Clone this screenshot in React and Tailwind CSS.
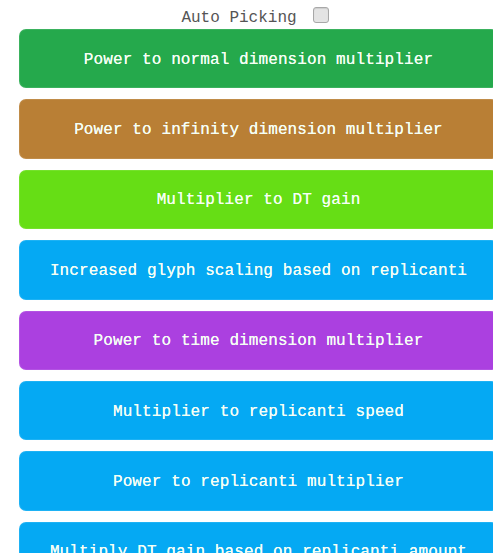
import React from "react";

const items = [
  ["Power to normal dimension multiplier", "bg-[#25a94c]"],
  ["Power to infinity dimension multiplier", "bg-[#b97f35]"],
  ["Multiplier to DT gain", "bg-[#66de15]"],
  ["Increased glyph scaling based on replicanti", "bg-[#05a9f3]"],
  ["Power to time dimension multiplier", "bg-[#ab40e0]"],
  ["Multiplier to replicanti speed", "bg-[#05a9f3]"],
  ["Power to replicanti multiplier", "bg-[#05a9f3]"],
  ["Multiply DT gain based on replicanti amount", "bg-[#05a9f3]"],
];

export default function App() {
  return (
    <div className="w-[493px] h-[553px] overflow-hidden bg-white font-['Liberation_Mono',monospace]">
      <div className="flex items-center justify-center pl-[17px] pt-[7px] h-[29px]">
        <span className="text-[16px] text-[#555] leading-[20px]">Auto Picking</span>
        <span className="ml-[16px] mt-[-7px] w-[16px] h-[16px] rounded-[3px] border border-[#a8a8a8] bg-[#e4e4e4] shadow-[inset_0_1px_1px_rgba(0,0,0,0.1)]"></span>
      </div>
      <div className="pl-[19px] flex flex-col gap-[11px]">
        {items.map(([t, c], i) => (
          <div
            key={i}
            className={`${c} w-[479px] shrink-0 h-[59.4px] rounded-[7px] flex items-center justify-center pt-[2px] text-[16px] font-medium text-[#f4fff4] tracking-[0.1px] border border-white/10 [text-shadow:0_0_0.4px_#fff]`}
          >
            {t}
          </div>
        ))}
      </div>
    </div>
  );
}
